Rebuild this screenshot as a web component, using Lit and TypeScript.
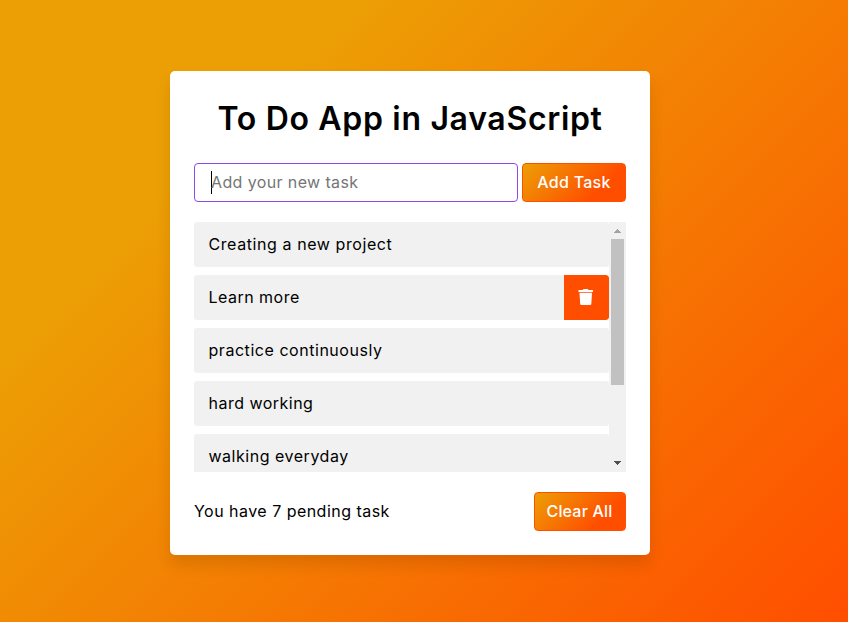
import { LitElement, html, css } from "lit";
import { customElement, state } from "lit/decorators.js";
import { styleMap } from "lit/directives/style-map.js";

interface Task {
  label: string;
  tracking: number;
}

@customElement("app-root")
export class AppRoot extends LitElement {
  static styles = css`
    :host {
      display: block;
      box-sizing: border-box;
      height: 622px;
      overflow: hidden;
      padding: 71px 0 0 170px;
      background: linear-gradient(315deg, #ff4e00 0%, #ec9f05 76%);
      font-family: Inter, "Noto Sans", sans-serif;
      font-size: 16px;
      color: #000;
    }
    * {
      box-sizing: border-box;
      margin: 0;
    }
    .card {
      width: 480px;
      height: 484px;
      padding: 24px;
      border-radius: 5px;
      background: #fff;
      box-shadow: 0 10px 15px rgba(0, 0, 0, 0.1);
    }
    .title {
      height: 48px;
      line-height: 48px;
      font-size: 32px;
      font-weight: 600;
      text-align: center;
      white-space: nowrap;
    }
    .text {
      padding-bottom: 2px;
    }
    .entry {
      display: flex;
      gap: 4px;
      height: 39px;
      margin-top: 20px;
    }
    .field {
      display: flex;
      align-items: center;
      width: 324px;
      padding-left: 16px;
      border: 1px solid #8e49e8;
      border-radius: 4px;
      color: #757575;
    }
    .caret {
      width: 1px;
      height: 23px;
      margin-right: -1px;
      background: #000;
    }
    .btn {
      display: flex;
      align-items: center;
      justify-content: center;
      height: 39px;
      border: 1px solid #ff4e00;
      border-radius: 4px;
      background: linear-gradient(135deg, #ec9f05 0%, #ff4e00 74%);
      color: #fff;
      font: inherit;
      font-weight: 500;
      padding: 0;
      white-space: nowrap;
    }
    .add {
      width: 104px;
    }
    .clear {
      width: 92px;
      padding-right: 1px;
    }
    .list {
      display: flex;
      height: 250px;
      margin-top: 20px;
      overflow: hidden;
    }
    .items {
      display: flex;
      flex-direction: column;
      gap: 8px;
      width: 415px;
    }
    .item {
      display: flex;
      flex: none;
      align-items: center;
      justify-content: space-between;
      height: 45px;
      padding-left: 14.5px;
      border-radius: 3px;
      background: #f1f1f1;
      overflow: hidden;
    }
    .trash {
      display: flex;
      align-self: flex-start;
      justify-content: flex-start;
      width: 45px;
      height: 44.5px;
      padding: 14px 0 0 14px;
      border-radius: 0 3px 3px 0;
      background: #ff4e00;
    }
    .bar {
      display: flex;
      flex-direction: column;
      align-items: center;
      width: 17px;
      background: #f1f1f1;
    }
    .arrow {
      display: block;
      width: 17px;
      height: 17px;
    }
    .thumb {
      width: 13px;
      height: 146px;
      background: #c1c1c1;
    }
    .down {
      margin-top: auto;
    }
    .footer {
      display: flex;
      align-items: center;
      justify-content: space-between;
      height: 39px;
      margin-top: 20px;
    }
  `;

  @state() private tasks: Task[] = [
    { label: "Creating a new project", tracking: 0.58 },
    { label: "Learn more", tracking: 0.48 },
    { label: "practice continuously", tracking: 0.54 },
    { label: "hard working", tracking: 0.48 },
    { label: "walking everyday", tracking: 0.52 },
  ];
  @state() private hovered = 1;

  private text(value: string, tracking: number) {
    return html`<span class="text" style=${styleMap({ letterSpacing: `${tracking}px` })}>${value}</span>`;
  }

  private trash() {
    return html`<span class="trash">
      <svg width="15" height="16" viewBox="0 0 15 16" fill="#fff">
        <path d="M0.5 1h4.200l.6-.8q.1-.2.4-.2h3.800q.3 0 .4.200l.6.8h4q.5 0 .5.500v1q0 .5-.5.500H.5V1Z" />
        <path d="M1.500 3.800h12.500l-.7 11.200q-.1 1-1 1H3.200q-.9 0-1-1Z" />
      </svg>
    </span>`;
  }

  render() {
    return html`
      <main class="card">
        <h1 class="title">${this.text("To Do App in JavaScript", 0.68)}</h1>
        <div class="entry">
          <div class="field"><i class="caret"></i>${this.text("Add your new task", 0.38)}</div>
          <button class="btn add">${this.text("Add Task", 0.28)}</button>
        </div>
        <div class="list">
          <div class="items">
            ${this.tasks.map(
              (t, i) => html`<div class="item">
                ${this.text(t.label, t.tracking)}${i === this.hovered ? this.trash() : ""}
              </div>`
            )}
          </div>
          <div class="bar">
            <svg class="arrow" viewBox="0 0 17 17" shape-rendering="crispEdges">
              <path d="M8 7h1v1h1v1h1v1h1v1H5v-1h1V9h1V8h1Z" fill="#a3a3a3" />
            </svg>
            <div class="thumb"></div>
            <svg class="arrow down" viewBox="0 0 17 17" shape-rendering="crispEdges">
              <path d="M5 6h7v1h-1v1h-1v1H9v1H8V9H7V8H6V7H5Z" fill="#505050" />
            </svg>
          </div>
        </div>
        <div class="footer">
          ${this.text("You have 7 pending task", 0.47)}
          <button class="btn clear">${this.text("Clear All", 0.2)}</button>
        </div>
      </main>
    `;
  }
}
